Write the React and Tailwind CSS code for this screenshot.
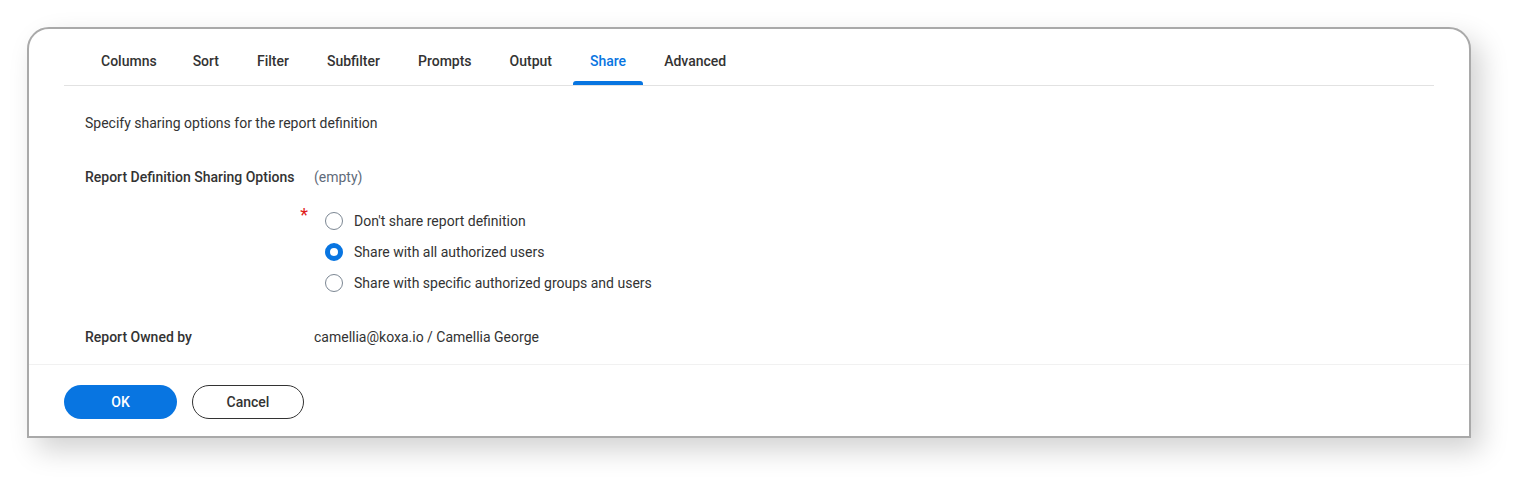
import React from "react";

const tabs = ["Columns", "Sort", "Filter", "Subfilter", "Prompts", "Output", "Share", "Advanced"];

function Radio({ checked }) {
  if (checked) {
    return (
      <span className="w-[18px] h-[18px] rounded-full border-[5px] border-[#0875e1] bg-white box-border shrink-0" />
    );
  }
  return <span className="w-[18px] h-[18px] rounded-full border border-[#7c8793] bg-white box-border shrink-0" />;
}

export default function App() {
  const options = [
    { label: "Don't share report definition", checked: false },
    { label: "Share with all authorized users", checked: true },
    { label: "Share with specific authorized groups and users", checked: false },
  ];
  return (
    <div className="w-[1526px] h-[492px] bg-white pt-[27px] pl-[27px] font-['Roboto',_'Liberation_Sans',_sans-serif] text-[#333333]">
      <div className="w-[1444px] h-[411px] bg-white border-2 border-[#a9a9a9] rounded-t-[22px] shadow-[10px_12px_28px_rgba(0,0,0,0.18)] flex flex-col">
        <div className="flex-1 px-[35px]">
          <div className="flex pl-[20px] border-b border-[#e2e2e2] h-[57px] items-stretch">
            {tabs.map((t, i) => (
              <div
                key={t}
                className={
                  "relative flex items-center pt-[8px] text-[14px] font-medium " +
                  (i === 0 ? "pl-[17px] pr-[16px] mr-[3px] " : "px-[17px] mr-[4px] ") +
                  (t === "Share" ? "text-[#0875e1]" : "text-[#333333]")
                }
              >
                {t}
                {t === "Share" && (
                  <span className="absolute left-0 right-0 bottom-0 h-[4px] rounded-t-[3px] bg-[#0875e1]" />
                )}
              </div>
            ))}
          </div>
          <div className="pl-[21px]">
            <p className="mt-[27px] text-[14px] leading-[20px]">Specify sharing options for the report definition</p>
            <div className="mt-[34px] flex text-[14px] leading-[20px]">
              <div className="w-[229px] font-medium">Report Definition Sharing Options</div>
              <div className="text-[#5f6b7a]">(empty)</div>
            </div>
            <div className="mt-[24px] flex">
              <div className="w-[223px] flex justify-end">
                <span className="text-[#e01b1b] text-[18px] leading-[18px] mt-[-5px]">*</span>
              </div>
              <div className="flex flex-col gap-[11px]">
                {options.map((o) => (
                  <div key={o.label} className="flex items-center h-[20px] text-[14px] leading-[20px]">
                    <span className="ml-[17px] mr-[11px] flex">
                      <Radio checked={o.checked} />
                    </span>
                    {o.label}
                  </div>
                ))}
              </div>
            </div>
            <div className="mt-[34px] flex text-[14px] leading-[20px]">
              <div className="w-[229px] font-medium">Report Owned by</div>
              <div>camellia@koxa.io / Camellia George</div>
            </div>
          </div>
        </div>
        <div className="h-[72px] border-t border-[#f1f1f1] flex items-start pt-[20px] pl-[35px] gap-[15px]">
          <button className="w-[113px] h-[34px] rounded-full bg-[#0875e1] text-white text-[14px] font-medium">OK</button>
          <button className="w-[112px] h-[34px] rounded-full border border-[#333333] bg-white text-[#333333] text-[14px] font-medium">
            Cancel
          </button>
        </div>
      </div>
    </div>
  );
}
